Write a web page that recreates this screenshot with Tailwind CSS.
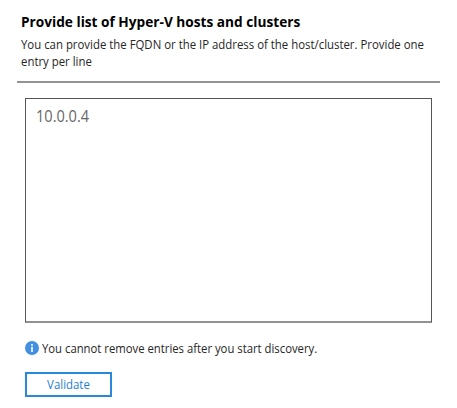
<!DOCTYPE html>
<html lang="en">
<head>
<meta charset="utf-8">
<title>Hyper-V hosts</title>
<script src="https://cdn.jsdelivr.net/npm/@tailwindcss/browser@4"></script>
</head>
<body class="bg-white font-['Open_Sans','Noto_Sans',sans-serif] text-[12px] text-[#262626]">
<main class="flex h-[408px] w-[457px] flex-col items-start overflow-hidden pt-[11px] whitespace-nowrap">
  <h1 class="ml-[21px] h-[25px] origin-left scale-x-[0.976] text-[14px] leading-[21px] font-bold text-black">Provide list of Hyper-V hosts and clusters</h1>
  <p class="ml-[21px] h-[45px] origin-left scale-x-[0.949] leading-[17px]">You can provide the FQDN or the IP address of the host/cluster. Provide one<br>entry per line</p>
  <div class="ml-[17px] h-[2px] w-[423px] bg-[#939393]"></div>
  <div class="mt-[15px] ml-[25px] h-[225px] w-[407px] border border-b-2 border-[#555] border-b-[#929292] pt-[7px] pl-[10px] text-[16px] leading-[21px] text-[#666]"><span class="inline-block origin-left scale-x-[0.91]">10.0.0.4</span></div>
  <div class="mt-[16px] ml-[25px] flex h-[18px] items-center gap-[3px]">
    <svg class="h-[14px] w-[14px]" viewBox="0 0 14 14"><circle cx="7" cy="7" r="7" fill="#4290df"/><path d="M6.2 3h1.6v1.7H6.2zM6.2 5.8h1.6V11H6.2z" fill="#fff"/></svg>
    <span class="origin-left scale-x-[0.942] pt-px leading-[17px]">You cannot remove entries after you start discovery.</span>
  </div>
  <button class="mt-[15px] ml-[25px] h-[25px] w-[87px] border-2 border-[#2788dc] pt-px text-[12px] leading-[20px] text-[#1f80d6]"><span class="inline-block scale-x-[0.95]">Validate</span></button>
</main>
</body>
</html>
